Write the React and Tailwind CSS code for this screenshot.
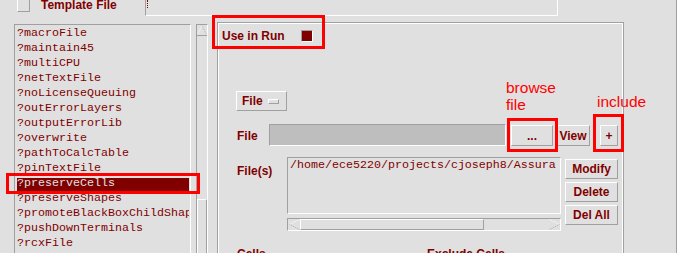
import React from "react";

const items = [
  "?macroFile",
  "?maintain45",
  "?multiCPU",
  "?netTextFile",
  "?noLicenseQueuing",
  "?outErrorLayers",
  "?outputErrorLib",
  "?overwrite",
  "?pathToCalcTable",
  "?pinTextFile",
  "?preserveCells",
  "?preserveShapes",
  "?promoteBlackBoxChildShapes",
  "?pushDownTerminals",
  "?rcxFile",
  "?rcxSimple",
];

// motif style bevels
const raised =
  "border border-t-white border-l-white border-r-[#a0a0a0] border-b-[#a0a0a0]";
const sunken =
  "border border-t-[#a0a0a0] border-l-[#a0a0a0] border-r-white border-b-white";

const UpArrow = () => (
  <svg width="10" height="10" viewBox="0 0 10 10">
    <path d="M5 0.5 L0.5 9.5" stroke="#ffffff" strokeDasharray="1 1" fill="none" />
    <path d="M5 0.5 L9.5 9.5" stroke="#b0b0b0" strokeDasharray="1 1" fill="none" />
  </svg>
);

const LeftArrow = () => (
  <svg width="11" height="11" viewBox="0 0 11 11">
    <path d="M10.5 0.5 L0.5 5.5" stroke="#ffffff" strokeDasharray="1 1" fill="none" />
    <path d="M0.5 5.5 L10.5 10.5" stroke="#b0b0b0" strokeDasharray="1 1" fill="none" />
  </svg>
);

const RightArrow = () => (
  <svg width="11" height="11" viewBox="0 0 11 11">
    <path d="M0.5 0.5 L10.5 5.5" stroke="#ffffff" strokeDasharray="1 1" fill="none" />
    <path d="M10.5 5.5 L0.5 10.5" stroke="#b0b0b0" strokeDasharray="1 1" fill="none" />
  </svg>
);

const Btn = ({ label, className }) => (
  <div
    className={`${raised} flex items-center justify-center text-[12px] leading-[12px] font-bold ${className}`}
  >
    {label}
  </div>
);

export default function App() {
  return (
    <div className="relative w-[677px] h-[253px] overflow-hidden bg-[#e0e0e0] border-r border-[#a0a0a0] text-[#800000] font-['Liberation_Sans',Arial,sans-serif]">
      {/* top strip */}
      <div className="flex h-[16px]">
        <div className={`ml-[17px] mt-[-1px] w-[13px] h-[13px] ${raised}`} />
        <div className="ml-[11px] mt-[-1px] w-[104px] text-[12px] leading-[12px] font-bold">
          Template File
        </div>
        <div className="w-[413px] h-[16px] border-l border-l-[#a0a0a0] border-r border-r-white border-b border-b-white">
          <div className="ml-[1px] h-[8px] border-l border-dotted border-[#800000]" />
        </div>
      </div>

      <div className="flex mt-[6px]">
        {/* option list */}
        <div className={`ml-[14px] mt-[2px] w-[177px] h-[240px] pt-[1px] pl-[2px] ${sunken} overflow-hidden`}>
          {items.map((it, i) => (
            <div
              key={it}
              className={`w-[172px] h-[15px] leading-[15px] whitespace-nowrap overflow-hidden text-[11.67px] font-['Liberation_Mono',monospace] ${
                i === 10
                  ? "bg-[linear-gradient(to_bottom,transparent_2px,#800000_2px)] text-[#e0e0e0]"
                  : ""
              }`}
            >
              {it}
            </div>
          ))}
        </div>

        {/* vertical scrollbar */}
        <div className="ml-[5px] mt-[2px] w-[12px] h-[240px] flex flex-col border-l border-t border-[#a0a0a0] border-r border-r-white">
          <div className="h-[11px] flex items-end justify-center border-b border-[#a0a0a0]">
            <UpArrow />
          </div>
          <div className="mt-[163px] flex-1 border-t border-l border-white border-r border-r-[#a0a0a0]" />
        </div>

        {/* right panel */}
        <div className="ml-[9px] w-[407px] h-[240px] border border-b-0 border-[#a0a0a0]">
          <div className="h-full border-l border-t border-r border-white flex flex-col">
            <div className="flex items-center h-[12px] mt-[6px] ml-[3px]">
              <div className="w-[79px] text-[12px] leading-[12px] font-bold">Use in Run</div>
              <div className={`w-[12px] h-[12px] ${sunken} bg-[#800000]`} />
            </div>

            <div className={`mt-[49px] ml-[17px] w-[51px] h-[20px] ${raised} flex items-center pl-[5px]`}>
              <span className="text-[12px] leading-[12px] font-bold">File</span>
              <span className={`ml-[5px] w-[11px] h-[5px] ${raised}`} />
            </div>

            <div className="flex items-start mt-[13px] ml-[18px]">
              <div className="w-[32px] mt-[6px] text-[12px] leading-[12px] font-bold">File</div>
              <div className={`w-[237px] h-[22px] ${sunken} bg-[#bebebe]`} />
              <Btn label="..." className="ml-[5px] mt-[1px] w-[42px] h-[21px]" />
              <Btn label="View" className="ml-[3px] mt-[1px] w-[34px] h-[21px]" />
              <Btn label="+" className="ml-[10px] mt-[1px] w-[18px] h-[21px]" />
            </div>

            <div className="flex items-start mt-[11px] ml-[18px]">
              <div className="w-[50px] mt-[8px] text-[12px] leading-[12px] font-bold">File(s)</div>
              <div className="w-[274px] flex flex-col">
                <div className={`h-[57px] ${sunken} pl-[2px] pr-[2px] overflow-hidden`}>
                  <div className="w-full overflow-hidden leading-[15px] whitespace-nowrap text-[11.67px] font-['Liberation_Mono',monospace]">
                    /home/ece5220/projects/cjoseph8/Assura
                  </div>
                </div>
                <div className={`mt-[4px] h-[13px] ${sunken} flex`}>
                  <div className="w-[12px] flex items-center justify-center">
                    <LeftArrow />
                  </div>
                  <div className={`w-[184px] h-full ${raised}`} />
                  <div className="ml-auto w-[12px] flex items-center justify-center">
                    <RightArrow />
                  </div>
                </div>
              </div>
              <div className="ml-[4px] mt-[2px] flex flex-col gap-[3px]">
                <Btn label="Modify" className="w-[53px] h-[20px]" />
                <Btn label="Delete" className="w-[53px] h-[20px]" />
                <Btn label="Del All" className="w-[53px] h-[20px]" />
              </div>
            </div>

            <div className="flex mt-[17px] ml-[18px] text-[12px] leading-[12px] font-bold">
              <div className="w-[190px]">Cells</div>
              <div>Exclude Cells</div>
            </div>
          </div>
        </div>
      </div>

      {/* annotations */}
      <div className="absolute left-[506px] top-[79px] text-[15.5px] leading-[17px] text-[#ff0000]">
        browse
        <br />
        file
      </div>
      <div className="absolute left-[597px] top-[93px] text-[15.5px] leading-[17px] text-[#ff0000]">
        include
      </div>
      <div className="absolute left-[212px] top-[15px] w-[113px] h-[34px] border-[3px] border-[#ff0000]" />
      <div className="absolute left-[6px] top-[173px] w-[194px] h-[21px] border-[3px] border-[#ff0000]" />
      <div className="absolute left-[507px] top-[118px] w-[51px] h-[34px] border-[3px] border-[#ff0000]" />
      <div className="absolute left-[593px] top-[114px] w-[31px] h-[38px] border-[3px] border-[#ff0000]" />
    </div>
  );
}
